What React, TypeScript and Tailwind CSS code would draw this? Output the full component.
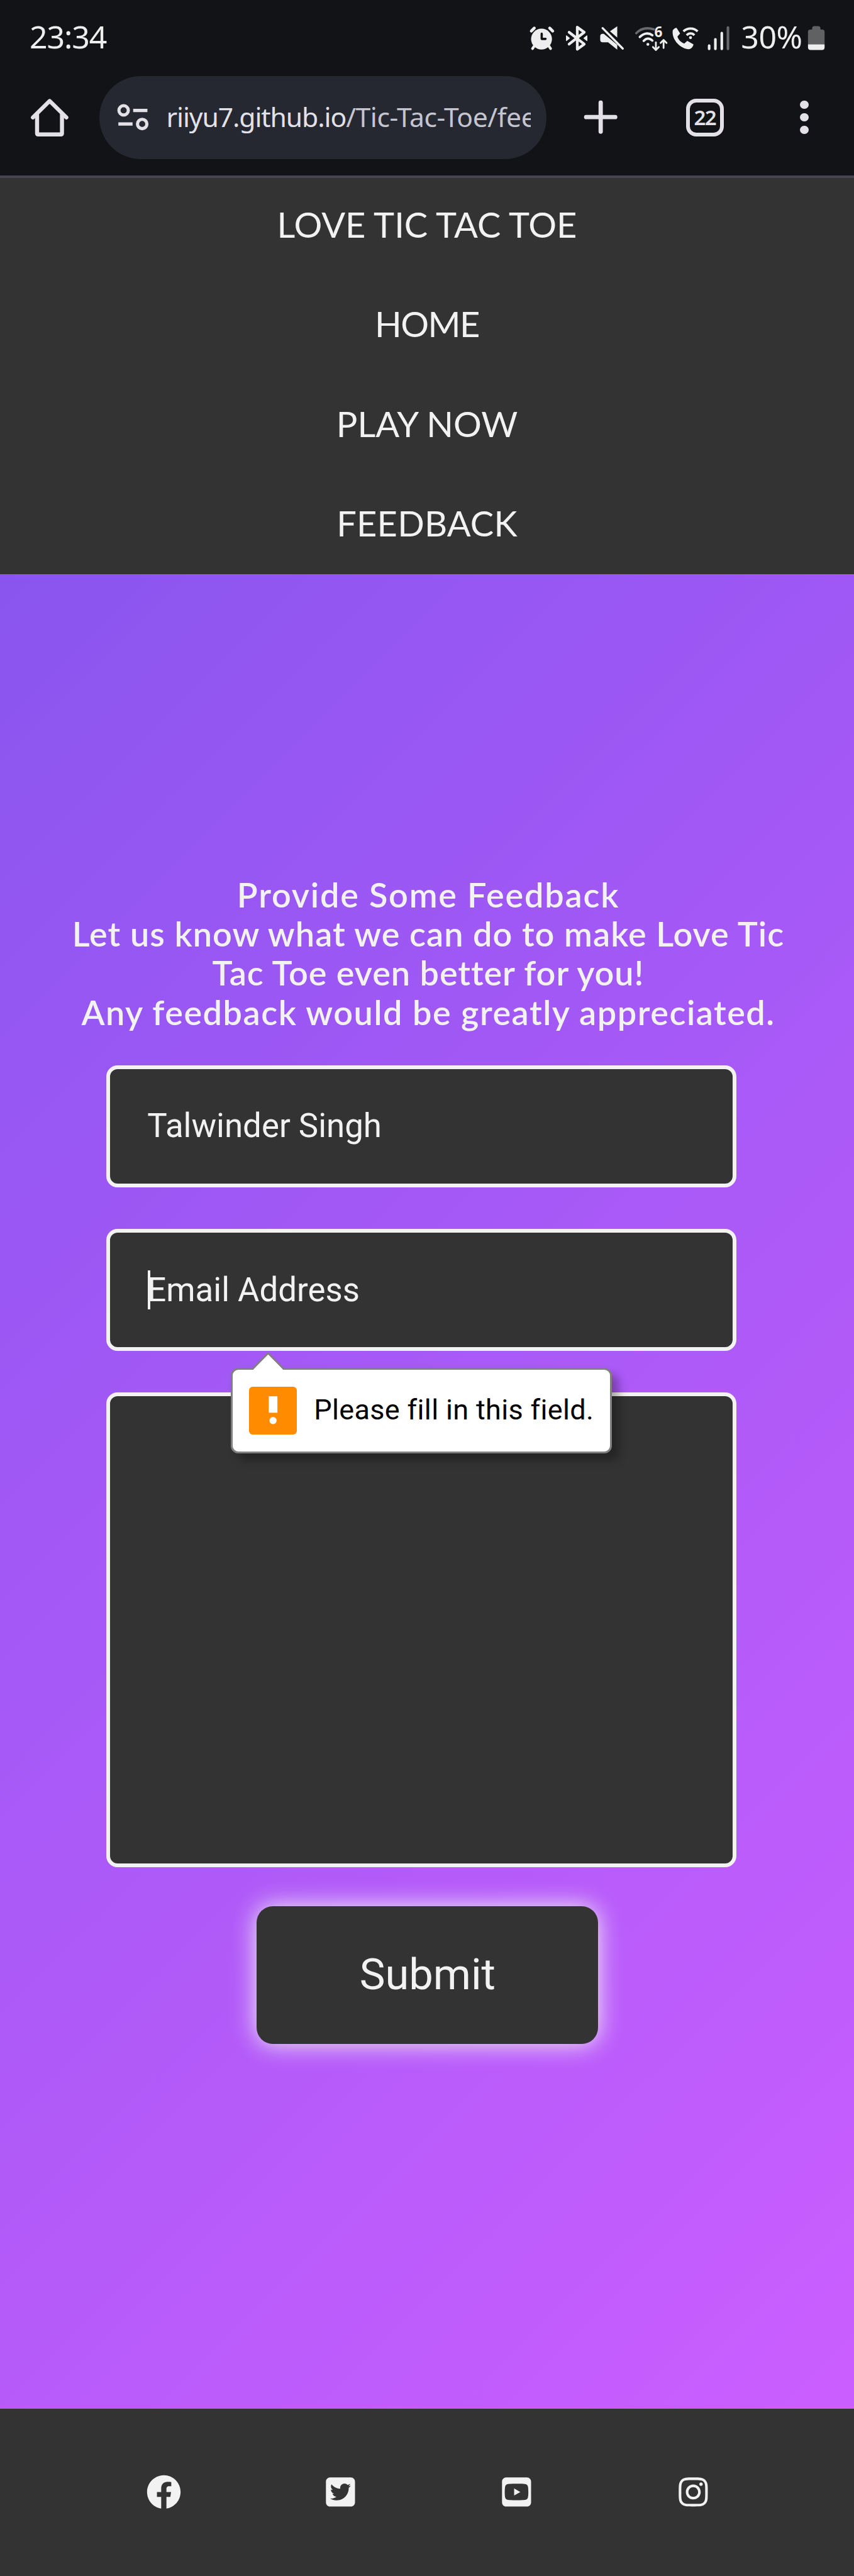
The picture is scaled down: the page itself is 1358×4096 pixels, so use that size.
import type { ReactNode } from "react";
import { FaFacebook } from "react-icons/fa";
import { FaInstagram, FaSquareTwitter, FaSquareYoutube } from "react-icons/fa6";

function Glyph({ box, className, children }: { box: string; className: string; children: ReactNode }) {
  return (
    <svg viewBox={box} className={className} fill="none" stroke="currentColor" strokeLinecap="round" strokeLinejoin="round">
      {children}
    </svg>
  );
}

function StatusBar() {
  return (
    <div className="flex h-[119px] items-center pl-[47px] text-[#eeeeee]">
      <span className="pb-[3px] font-['Noto_Sans',sans-serif] text-[50px] leading-none tracking-[-1.1px]">23:34</span>
      <div className="ml-auto flex items-center">
        <Glyph box="884 33 56 60" className="h-[56.6px] w-[52.8px]">
          <circle cx="911.7" cy="66" r="17.6" fill="currentColor" stroke="none" />
          <path d="M894.5 52.5l5-5M930.5 52.5l-5-5" strokeWidth="5" />
          <path d="M900 77l-3.5 5M923.5 77l3.5 5" strokeWidth="4.5" />
          <path d="M912 57v8.7h6.5" stroke="#121316" strokeWidth="3.8" />
        </Glyph>
        <Glyph box="940 33 60 60" className="h-[56.6px] w-[56.6px]">
          <path d="M958 54.5L983.5 74.5 971.8 83V46L983.5 54.5 958 74.5" strokeWidth="4.6" />
          <path d="M953.5 60.5l5 4-5 4zM988 60.5l-5 4 5 4z" fill="currentColor" strokeWidth="1.5" />
        </Glyph>
        <Glyph box="1000 33 60 60" className="h-[56.6px] w-[56.6px]">
          <path d="M1026.5 53L1038.7 44.5v19zM1016 57h-2c-2.500 0-4 1.700-4 4v6.500c0 2.300 1.500 4 4 4h9.300l15.400 12.300v-8z" fill="currentColor" stroke="none" />
          <path d="M1014 47.500l34 34.500" strokeWidth="3.6" />
        </Glyph>
        <Glyph box="1060 33 68 60" className="h-[56.6px] w-[64.1px]">
          <path d="M1071.500 56c9-9.500 21-9 29.500-6.500" stroke="#68696b" strokeWidth="4" />
          <path d="M1077.500 62.500c6.500-7 15-7.500 21-3M1084 69c4.500-5 10-5 14.500-.5" strokeWidth="4" />
          <circle cx="1091" cy="75" r="2.400" fill="currentColor" stroke="none" />
          <path d="M1104.500 71.500v12.500M1099.500 79.500l5 5 5-5M1117.500 81v-13M1112.500 72.500l5-5 5 5" strokeWidth="3" />
          <text x="1102" y="63" fontSize="24" fontWeight="700" fontFamily="Noto Sans, sans-serif" fill="currentColor" stroke="none">6</text>
        </Glyph>
        <Glyph box="1128 33 60 60" className="h-[56.6px] w-[56.6px]">
          <path d="M1133 51.500c1.500-2.500 4-4.500 6.500-4.500l6 9.500-4.500 5c1 5 6.500 10.500 11.500 12l5-4.500 10.500 6c-.5 4-4 8-8 8-13-.5-29-15-27-31.500z" fill="currentColor" stroke="none" />
          <path d="M1151 53c7-6.500 17.500-6.500 24 0M1156.500 59.500c4-4 9.500-4 13 0" strokeWidth="4" strokeLinecap="butt" />
          <circle cx="1163" cy="63.500" r="2.500" fill="currentColor" stroke="none" />
        </Glyph>
        <Glyph box="1188 33 46 60" className="h-[56.6px] w-[43.4px]">
          <path d="M1194 77v5.500M1204.500 66.500v16M1215.300 56v26.500" strokeWidth="4.400" />
          <path d="M1225.700 46.500v36" stroke="#68696b" strokeWidth="4.400" />
        </Glyph>
        <span className="mr-[6px] ml-[13px] pb-[3px] font-['Noto_Sans',sans-serif] text-[50px] leading-none tracking-[-0.5px]">30%</span>
        <Glyph box="1359 33 81 60" className="h-[56.6px] w-[76.4px]">
          <path d="M1362 75V54q0-4 4-4h3v-2q0-4 4-4h6q4 0 4 4v2h3q4 0 4 4v21z" fill="#606162" stroke="none" />
          <path d="M1362 75h28v5q0 4.500-4.500 4.500h-19q-4.500 0-4.500-4.500z" fill="currentColor" stroke="none" />
        </Glyph>
      </div>
    </div>
  );
}

function Toolbar() {
  return (
    <div className="flex h-[135px] items-center text-[#e3e1e7]">
      <Glyph box="48 162 72 72" className="ml-[45.300px] h-[67.9px] w-[67.9px] shrink-0">
        <path d="M62.800 193v31.500q0 2 2 2h38q2 0 2-2V193" strokeWidth="6.800" />
        <path d="M55.800 197.800L84 170l28.200 27.800" strokeWidth="6.800" />
      </Glyph>
      <div className="ml-[45.300px] flex h-[132px] w-[711px] shrink-0 items-center rounded-full bg-[#252830]">
        <Glyph box="194 170 60 56" className="ml-[24.500px] h-[52.800px] w-[56.600px] shrink-0">
          <circle cx="208.400" cy="186.400" r="7.900" strokeWidth="5.400" />
          <circle cx="239.700" cy="209.400" r="7.900" strokeWidth="5.400" />
          <path d="M224.500 186.600h24M199.500 209.400h24" strokeWidth="5.400" strokeLinecap="butt" />
        </Glyph>
        <div className="ml-[25px] w-[579px] overflow-hidden pb-[1px] font-['Noto_Sans',sans-serif] text-[42.700px] leading-[60px] tracking-[-1.130px] whitespace-nowrap">
          riiyu7.github.io<span className="tracking-[-0.450px] text-[#c5c5d0]">/Tic-Tac-Toe/fee</span>
        </div>
      </div>
      <Glyph box="981 166 64 64" className="ml-[55.500px] h-[60.400px] w-[60.400px] shrink-0">
        <path d="M1013 173.500v49M988.500 198h49" strokeWidth="7.200" />
      </Glyph>
      <div className="ml-[105.500px] flex h-[60px] w-[60px] shrink-0 items-center justify-center rounded-[16px] border-[6.600px] border-[#e3e1e7] font-['Noto_Sans',sans-serif] text-[33px] leading-none font-semibold tracking-[-1.500px]">
        22
      </div>
      <div className="ml-[121.500px] flex shrink-0 flex-col gap-[6.600px]">
        <i className="size-[13.200px] rounded-full bg-[#e3e1e7]" />
        <i className="size-[13.200px] rounded-full bg-[#e3e1e7]" />
        <i className="size-[13.200px] rounded-full bg-[#e3e1e7]" />
      </div>
    </div>
  );
}

function Nav() {
  return (
    <nav className="flex h-[630px] flex-col items-center gap-[11.400px] bg-[#333333] font-['Lato',sans-serif] text-[56px] leading-[147px] text-[#f2f2f2]">
      <a>LOVE TIC TAC TOE</a>
      <a className="tracking-[-1.500px]">HOME</a>
      <a>PLAY NOW</a>
      <a className="tracking-[0.200px]">FEEDBACK</a>
    </nav>
  );
}

function ValidationBubble() {
  return (
    <div className="absolute top-[220.500px] left-[198px] flex h-[136px] w-[606.500px] items-center rounded-[12px] border-[3px] border-[#808080] bg-white pl-[26.400px] shadow-[11px_11px_15px_rgba(0,0,0,0.3)]">
      <svg viewBox="424 2277 56 34" className="absolute top-[-30.200px] left-[30.200px] h-[32px] w-[52.800px]">
        <path d="M425 2310.500L452 2281l27 29.500z" fill="#ffffff" />
        <path d="M425 2308L452 2281l27 27" fill="none" stroke="#808080" strokeWidth="3" />
      </svg>
      <svg viewBox="0 0 80 80" className="size-[76px] shrink-0">
        <rect width="80" height="80" rx="6" fill="#ff8c00" />
        <rect x="33" y="16" width="14.500" height="27.500" fill="#ffffff" />
        <circle cx="40.200" cy="56.500" r="6" fill="#ffffff" />
      </svg>
      <span className="ml-[27px] pb-[3px] font-['Roboto',sans-serif] text-[45px] leading-none tracking-[0.350px] whitespace-nowrap text-black">
        Please fill in this field.
      </span>
    </div>
  );
}

function FeedbackForm() {
  return (
    <form className="mt-[53px] ml-[168.800px] flex w-[1002.400px] flex-col font-['Roboto',sans-serif] text-[#f2f2f2]">
      <div className="flex h-[194.200px] items-center rounded-[18px] border-[6.600px] border-[#f2f2f2] bg-[#333333] pl-[59.500px] text-[52.800px]">
        Talwinder Singh
      </div>
      <div className="relative z-10 mt-[66.200px]">
        <div className="flex h-[194.200px] items-center rounded-[18px] border-[6.600px] border-[#f2f2f2] bg-[#333333] pl-[59.500px] text-[52.800px]">
          Email Address
        </div>
        <span className="absolute top-[66px] left-[66px] h-[62px] w-[4px] bg-[#f2f2f2]" />
        <ValidationBubble />
      </div>
      <div className="mt-[66px] h-[754.400px] rounded-[18px] border-[6.600px] border-[#f2f2f2] bg-[#333333]" />
      <button
        type="button"
        className="mt-[62px] ml-[239.500px] h-[219px] w-[543.200px] rounded-[26px] bg-[#333333] text-[68.600px] leading-none shadow-[0_0_38px_#f2f2f2]"
      >
        Submit
      </button>
    </form>
  );
}

export default function App() {
  return (
    <div className="flex h-[4096px] w-[1358px] flex-col overflow-hidden bg-[#333333]">
      <header className="h-[283px] shrink-0 border-b-[4px] border-[#45464f] bg-[#121316]">
        <StatusBar />
        <Toolbar />
      </header>
      <Nav />
      <main className="flex h-[2917px] shrink-0 flex-col bg-[linear-gradient(135deg,#8a55ef,#cb5eff)] pt-[479px]">
        <div className="flex flex-col items-center pl-[4px] font-['Lato',sans-serif] text-[54px] leading-[62.200px] font-semibold whitespace-nowrap text-[#f2f2f2]">
          <p className="tracking-[1.800px]">Provide Some Feedback</p>
          <p className="tracking-[1.070px]">Let us know what we can do to make Love Tic</p>
          <p className="tracking-[0.960px]">Tac Toe even better for you!</p>
          <p className="tracking-[1.520px]">Any feedback would be greatly appreciated.</p>
        </div>
        <FeedbackForm />
      </main>
      <footer className="flex h-[266px] shrink-0 items-center gap-[227.500px] bg-[#333333] pb-[2px] pl-[232.500px] text-[52.800px] text-[#f2f2f2]">
        <FaFacebook className="text-[55px]" />
        <FaSquareTwitter />
        <FaSquareYoutube />
        <FaInstagram />
      </footer>
    </div>
  );
}
